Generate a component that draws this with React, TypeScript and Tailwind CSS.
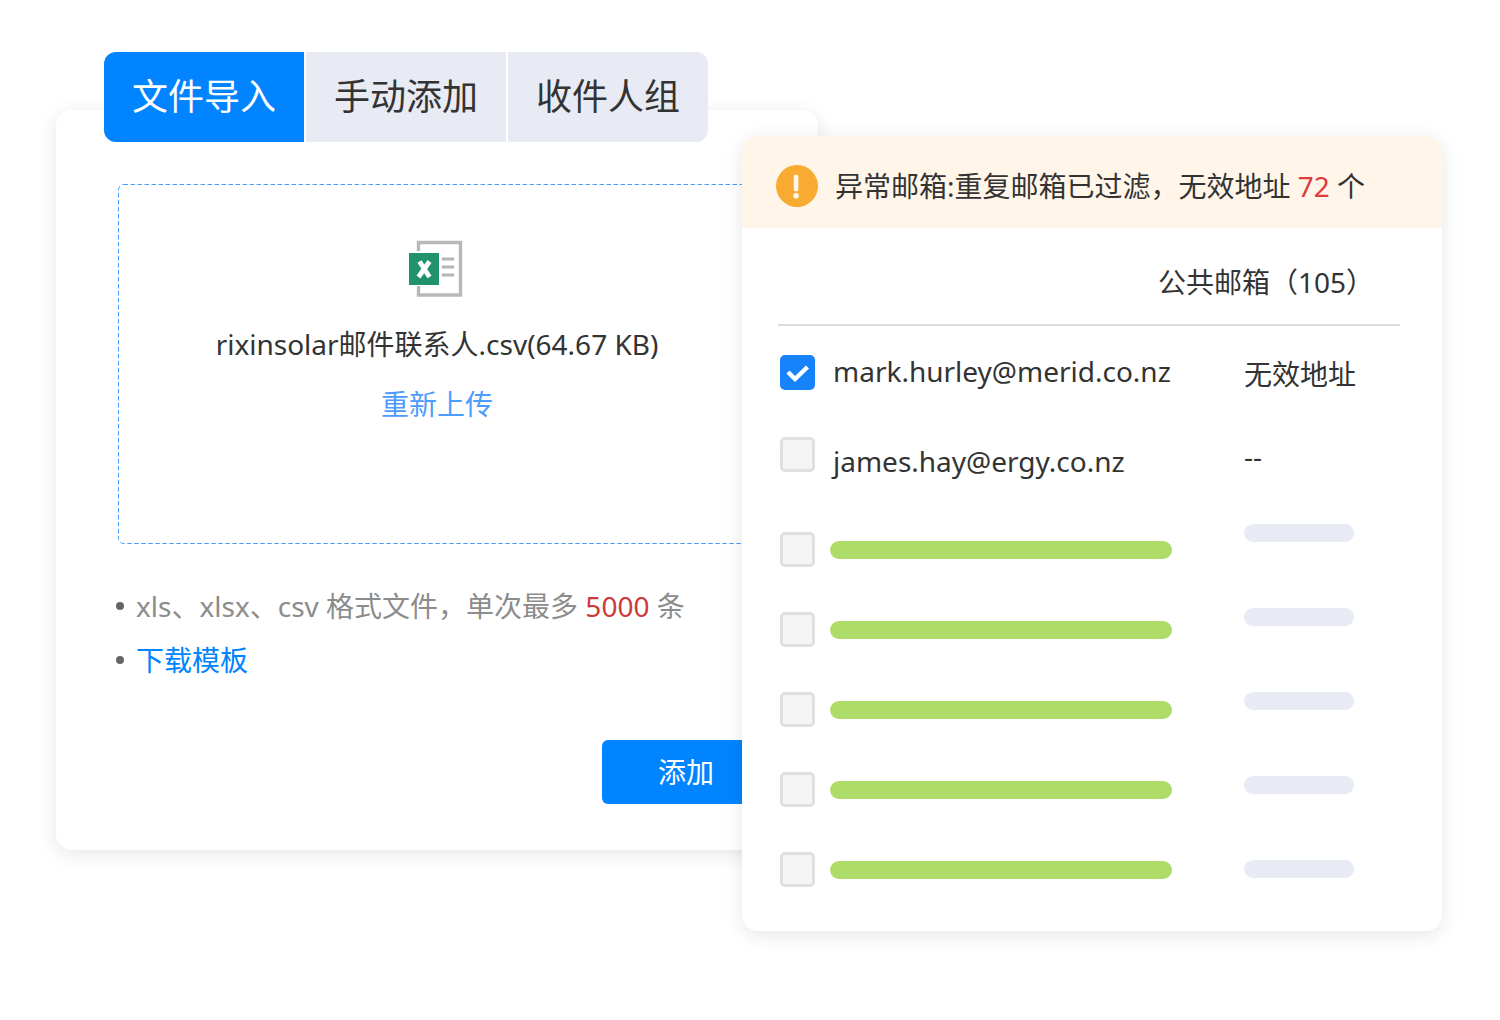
import { useState } from "react"

interface Contact {
  email: string
  status: string
  checked: boolean
  rowClass: string
}

const TABS = ["文件导入", "手动添加", "收件人组"]

const CONTACTS: Contact[] = [
  { email: "mark.hurley@merid.co.nz", status: "无效地址", checked: true, rowClass: "h-[83px]" },
  { email: "james.hay@ergy.co.nz", status: "--", checked: false, rowClass: "h-[90px]" },
]

const LOADING_ROWS = [3, 4, 5, 6, 7]

function Checkbox({ label, defaultChecked = false }: { label: string; defaultChecked?: boolean }) {
  return (
    <span className="grid size-[35px]">
      <input
        type="checkbox"
        aria-label={label}
        defaultChecked={defaultChecked}
        className="peer col-start-1 row-start-1 size-[35px] appearance-none rounded-[5px] border-[3px] border-[#e0e0e0] bg-[#f5f5f5] checked:border-[#1683fb] checked:bg-[#1683fb]"
      />
      <svg
        viewBox="0 0 35 35"
        className="pointer-events-none invisible col-start-1 row-start-1 size-[35px] peer-checked:visible"
        fill="none"
        stroke="#fff"
        strokeWidth="4.4"
      >
        <path d="M8 17l7 7L27.500 12" />
      </svg>
    </span>
  )
}

function ExcelIcon() {
  return (
    <svg viewBox="0 0 56 58" className="h-[58px] w-14" fill="none">
      <path d="M9.5 11V2.500H51.500V55H9.500V46" stroke="#b8b8b8" strokeWidth="3.400" />
      <path d="M33 19h12M33 27h12M33 35h12" stroke="#b4b4b4" strokeWidth="3.200" />
      <rect x="0" y="13" width="30" height="32" fill="#21936b" />
      <path d="M10.500 21.500l10 15.500M20.500 21.500L9.500 37" stroke="#fff" strokeWidth="4.800" />
    </svg>
  )
}

function WarningIcon() {
  return (
    <svg viewBox="0 0 42 42" className="h-[42px] w-[42px] shrink-0">
      <circle cx="21" cy="21" r="21" fill="#f8ab30" />
      <rect x="17.800" y="9.500" width="4.600" height="17" rx="2.300" fill="#fff6e9" />
      <circle cx="20.100" cy="30.800" r="2.800" fill="#fff6e9" />
    </svg>
  )
}

function ImportPanel() {
  const [active, setActive] = useState(0)

  return (
    <section className="-mr-[76px] mt-[110px] rounded-2xl bg-white px-12 pb-[46px] shadow-[0_4px_20px_rgba(0,0,0,0.1)]">
      <div className="-mt-[58px] flex w-fit gap-[2px] overflow-hidden rounded-xl bg-white">
        {TABS.map((tab, i) => (
          <button
            key={tab}
            type="button"
            onClick={() => setActive(i)}
            className={`h-[90px] w-[200px] text-4xl ${
              i === active ? "bg-[#0084ff] text-white" : "bg-[#e8ebf4] text-[#333]"
            }`}
          >
            {tab}
          </button>
        ))}
      </div>

      <div className="relative mx-[14px] mt-[42px] flex h-[360px] flex-col items-center pt-14">
        {/* drop area outline */}
        <svg className="pointer-events-none absolute inset-0 h-full w-full overflow-visible pr-px pb-px" fill="none">
          <rect x="0.5" y="0.5" width="100%" height="100%" rx="5" stroke="#4c9bff" strokeDasharray="4.500 2.500" />
        </svg>
        <ExcelIcon />
        <p className="mt-[26px] leading-10">rixinsolar邮件联系人.csv(64.67 KB)</p>
        <button type="button" className="mt-5 leading-10 text-[#4c9bff]">
          重新上传
        </button>
      </div>

      <ul className="mt-[35px] ml-3 flex flex-col leading-[54px] text-[#8c8c8c]">
        <li className="flex items-center gap-3">
          <span className="h-2 w-2 rounded-full bg-[#666]" />
          <span>
            xls、xlsx、csv 格式文件，单次最多 <span className="text-[#d0393b]">5000</span> 条
          </span>
        </li>
        <li className="flex items-center gap-3">
          <span className="h-2 w-2 rounded-full bg-[#666]" />
          <a href="#template" className="text-[#0084ff]">
            下载模板
          </a>
        </li>
      </ul>

      <div className="mt-[53px] flex justify-end">
        <button type="button" className="h-16 w-[168px] rounded-md bg-[#0084ff] text-white">
          添加
        </button>
      </div>
    </section>
  )
}

function ResultPanel() {
  return (
    <section className="relative z-10 mt-[136px] overflow-hidden rounded-2xl bg-white shadow-[0_4px_20px_rgba(0,0,0,0.1)]">
      <div className="flex h-[92px] items-center gap-[17px] bg-[#fff6e9] px-[34px] pt-2">
        <WarningIcon />
        <p className="whitespace-nowrap">
          异常邮箱:重复邮箱已过滤，无效地址 <span className="text-[#e03a3e]">72</span> 个
        </p>
      </div>

      <div className="pr-[42px] pb-11 pl-9">
        <table className="w-full table-fixed border-collapse">
          <colgroup>
            <col className="w-[55px]" />
            <col />
            <col className="w-[156px]" />
          </colgroup>
          <thead>
            <tr className="h-[97px] border-b-2 border-[#dcdcdc]">
              <th colSpan={3} className="pt-3 pr-[26px] text-right font-normal">
                公共邮箱（105）
              </th>
            </tr>
          </thead>
          <tbody>
            {CONTACTS.map((c) => (
              <tr key={c.email} className={c.rowClass}>
                <td className="pt-[29px] pl-[2px] align-top">
                  <Checkbox label={c.email} defaultChecked={c.checked} />
                </td>
                <td className="pb-[17px] align-bottom leading-10">{c.email}</td>
                <td className="pt-7 align-top leading-10">{c.status}</td>
              </tr>
            ))}
          </tbody>
        </table>

        <div className="mt-[26px] grid grid-cols-[52px_1fr_156px] items-end">
          <div className="flex flex-col gap-[45px] pl-[2px]">
            {LOADING_ROWS.map((n) => (
              <Checkbox key={n} label={`第 ${n} 行`} />
            ))}
          </div>
          <div className="flex flex-col gap-[62px] pr-[72px] pb-2">
            {LOADING_ROWS.map((n) => (
              <div key={n} className="h-[18px] rounded-full bg-[#afdb68]" />
            ))}
          </div>
          <div className="flex flex-col gap-[66px] pb-[9px]">
            {LOADING_ROWS.map((n) => (
              <div key={n} className="h-[18px] w-[110px] rounded-full bg-[#e8ebf4]" />
            ))}
          </div>
        </div>
      </div>
    </section>
  )
}

export default function App() {
  return (
    <main className="grid min-h-screen grid-cols-[minmax(0,686fr)_minmax(0,700fr)] items-start bg-white pr-[58px] pb-16 pl-14 font-['Noto_Sans','Noto_Sans_CJK_SC',sans-serif] text-[28px] text-[#333]">
      <ImportPanel />
      <ResultPanel />
    </main>
  )
}
